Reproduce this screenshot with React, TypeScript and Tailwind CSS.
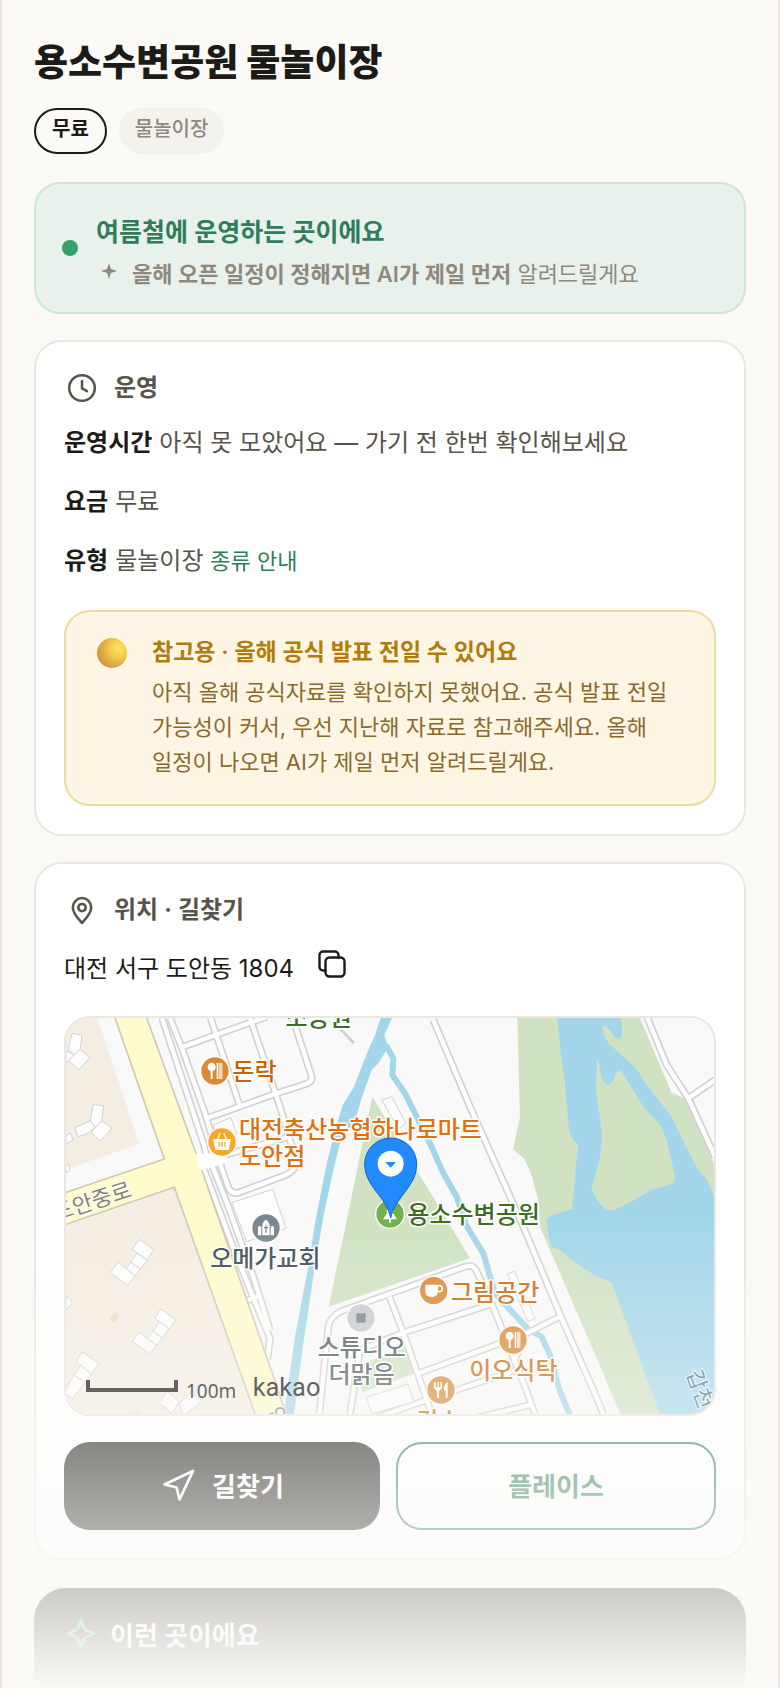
import type { ReactNode } from "react";
import { Navigation } from "lucide-react";

const MAP_FONT = "font-['Noto_Sans_CJK_KR',sans-serif]";

function ClockIcon() {
  return (
    <svg viewBox="0 0 36 36" className="size-9" fill="none" stroke="currentColor" strokeWidth="2.5" strokeLinecap="round" strokeLinejoin="round" aria-hidden="true">
      <circle cx="18" cy="18" r="12.8" />
      <path d="M18 11v7.4l5 2.8" />
    </svg>
  );
}

function PinIcon() {
  return (
    <svg viewBox="0 0 36 36" className="size-9" fill="none" stroke="currentColor" strokeWidth="2.5" strokeLinecap="round" strokeLinejoin="round" aria-hidden="true">
      <path d="M18 31c-2.200-3-9.200-8.600-9.200-15.700a9.200 9.200 0 0 1 18.400 0C27.200 22.400 20.200 28 18 31z" />
      <circle cx="18" cy="15.600" r="3.700" />
    </svg>
  );
}

function CopyIcon() {
  return (
    <svg viewBox="0 0 28 28" className="size-7" fill="none" stroke="currentColor" strokeWidth="2.4" strokeLinecap="round" strokeLinejoin="round" aria-hidden="true">
      <rect x="7.500" y="7.500" width="19" height="19" rx="4" />
      <path d="M7.500 20.500H5a3.500 3.500 0 0 1-3.500-3.500V5A3.500 3.500 0 0 1 5 1.500h12A3.500 3.500 0 0 1 20.500 5v2.500" />
    </svg>
  );
}

function StarIcon() {
  return (
    <svg viewBox="0 0 36 36" className="size-9" fill="none" stroke="currentColor" strokeWidth="2.800" strokeLinejoin="round" aria-hidden="true">
      <path d="M17 2.500l3.200 7.600a4 4 0 0 0 2.200 2.200L30 15.500l-7.600 3.200a4 4 0 0 0-2.200 2.200L17 28.500l-3.200-7.600a4 4 0 0 0-2.200-2.200L4 15.500l7.600-3.200a4 4 0 0 0 2.200-2.200z" />
    </svg>
  );
}

function CardHeader({ icon, children }: { icon: ReactNode; children: ReactNode }) {
  return (
    <h2 className="flex items-center gap-[14px] text-[24px] leading-9 font-semibold text-[#57534a]">
      {icon}
      {children}
    </h2>
  );
}

function InfoRow({ label, children }: { label: string; children: ReactNode }) {
  return (
    <div className="flex flex-wrap items-baseline gap-x-[7px]">
      <dt className="font-semibold text-[#1c1b18]">{label}</dt>
      <dd className="text-[#57534a]">{children}</dd>
    </div>
  );
}

const minorRoads = [
  "M336 24L462 405L470 440",
  "M360 24L395 112L470 325L500 430",
  "M395 112L650 20",
  "M470 325L680 250L768 222Q790 215 784 196L728 24",
  "M482 24L570 290",
  "M600 24L690 290L735 440Q745 480 705 496L565 548Q545 553 536 535L508 455",
  "M440 455L508 440L720 380",
  "M462 478L560 740L625 900L660 985L652 1050",
  "M488 470L535 590L610 800L660 960",
  "M590 872L630 858",
  "M808 1212L835 950Q838 925 870 905L1245 770Q1268 762 1278 780L1325 880L1425 1130L1455 1212",
  "M900 1212L930 1020L1060 968L1325 882",
  "M1018 860L1060 968L1120 1140L1145 1212",
  "M1100 1092L1345 1002L1440 965L1530 920",
  "M930 1240L1130 1170L1400 1080",
  "M1210 1240L1440 1185",
  "M1425 975L1390 1060",
  "M1150 30L1260 290L1420 650L1535 925L1630 1140L1660 1212",
  "M1790 18L1850 165L1915 265L1995 440",
  "M1915 265L1995 210",
];

const buildings = [
  "M66 70L96 76L90 118L72 134L55 118Z",
  "M90 118L120 142L86 179L56 152L72 134Z",
  "M48 122L72 134L48 160Z",
  "M130 283L161 288L155 333L136 352L121 333Z",
  "M155 333L186 354L151 393L124 367L136 352Z",
  "M121 333L136 352L110 372L84 380L74 353Z",
  "M48 376L62 369L69 391L48 401Z",
  "M48 466L56 461L60 482L48 488Z",
  "M268 688L311 719L292 751L246 718Z",
  "M261 729L292 751L271 777L242 757Z",
  "M242 757L271 777L255 798L229 776Z",
  "M229 776L255 798L232 825L181 788L205 757Z",
  "M333 897L377 929L358 957L314 925Z",
  "M328 935L358 957L337 984L309 963Z",
  "M309 963L337 984L320 1006L292 986Z",
  "M292 986L320 1006L299 1032L247 994L268 967Z",
  "M97 1026L146 1060L124 1092L78 1055Z",
  "M92 1066L124 1092L104 1119L72 1095Z",
  "M72 1095L104 1119L69 1164L40 1150Z",
  "M350 1144L388 1175L365 1210L328 1178Z",
  "M388 1180L420 1150L460 1172L400 1216Z",
  "M48 858L68 877L48 902Z",
  "M245 1202L270 1212H240Z",
  "M545 578L668 538L708 655L590 695Z",
  "M490 345L543 323L560 372L508 392Z",
  "M996 270L1025 260L1068 340L1045 357Z",
  "M1372 792L1394 784L1455 925L1434 935Z",
  "M950 1162L1073 1122L1092 1175L965 1212Z",
];

function Poi({ x, y, color, children }: { x: number; y: number; color: string; children: ReactNode }) {
  return (
    <g transform={`translate(${x} ${y})`}>
      <circle r="43" fill={color} stroke="#fff" strokeWidth="4" />
      {children}
    </g>
  );
}

function SpoonGlyph() {
  return (
    <g fill="#fff">
      <ellipse cx="-10" cy="-12" rx="12" ry="13" />
      <rect x="-13" y="-4" width="6" height="28" />
      <rect x="5" y="-24" width="5" height="48" />
      <rect x="13" y="-24" width="4" height="48" />
      <rect x="19" y="-24" width="3" height="48" />
    </g>
  );
}

function Label({ x, y, color, anchor, children }: { x: number; y: number; color: string; anchor?: "middle"; children: string }) {
  return (
    <text
      x={x}
      y={y}
      fill={color}
      stroke="#fff"
      strokeWidth="9"
      strokeLinejoin="round"
      paintOrder="stroke"
      textAnchor={anchor}
      fontSize="72"
      className={`${MAP_FONT} font-medium`}
    >
      {children}
    </text>
  );
}

function MapView() {
  return (
    <svg viewBox="48 24 1944 1188" preserveAspectRatio="xMidYMid slice" className="block h-full w-full" role="img" aria-label="용소수변공원 지도">
      <rect x="48" y="24" width="1944" height="1188" fill="#f9f9f9" />
      <path d="M48 24H143L268 402L48 478Z" fill="#f4ede2" />
      <path d="M48 648L373 535L612 1212H48Z" fill="#f4ede2" />
      <path d="M193 906L207 914L193 938L179 930Z" fill="#eaddb9" />

      {/* parks */}
      <path d="M967 260L1100 480L1260 745L836 890L905 560L935 410Z" fill="#d0e2c2" />
      <path d="M935 1062L1062 1012L1095 1090L935 1147Z" fill="#d0e2c2" />
      <path d="M1402 24H1770L1865 248L1905 265L1992 460V1212H1710L1655 1080L1470 650L1465 570L1442 487L1423 447L1389 418L1410 320Z" fill="#d0e2c2" />

      {/* water */}
      <path d="M1522 24H1714L1717 78Q1705 95 1690 75Q1672 45 1660 48Q1652 65 1675 100L1725 145Q1765 178 1780 210L1810 250L1865 320Q1905 410 1945 480L1970 508L1992 558V1212H1830L1685 818L1635 797L1590 768L1530 720L1506 710Q1488 665 1491 627Q1495 617 1567 597L1575 500L1584 403L1568 388L1557 362L1543 200L1533 140Z" fill="#a3d6ea" />
      <path d="M1641 152Q1646 146 1648 165L1654 200Q1670 238 1687 215L1698 188Q1713 175 1722 195L1780 290L1835 350L1853 400L1875 500L1870 520L1805 540L1715 590Q1680 608 1662 595Q1628 560 1625 532L1650 445L1657 380L1638 240Z" fill="#d0e2c2" />
      <path d="M992 24L975 75L955 120L935 170L912 230L878 285L860 345L835 440L822 500L795 640L775 770L750 900L735 980L708 1170L703 1212H732L760 1000L790 800L820 620L850 480L870 400L915 330L940 250L965 180L985 160L1015 112L1003 75L1026 24Z" fill="#a3d6ea" />
      <path d="M1008 105L1030 145L1027 195L1065 250L1100 320L1140 400L1180 490L1220 560L1248 645L1300 730L1320 800L1335 850L1390 910L1435 958L1475 980L1500 1035L1530 1145L1560 1215" fill="none" stroke="#a3d6ea" strokeWidth="18" strokeLinejoin="round" />

      {/* streets */}
      <g fill="none" stroke="#d2d2d2" strokeWidth="23" strokeLinejoin="round">
        {minorRoads.map((d) => (
          <path key={d} d={d} />
        ))}
      </g>
      <g fill="none" stroke="#fff" strokeWidth="13" strokeLinejoin="round">
        {minorRoads.map((d) => (
          <path key={d} d={d} />
        ))}
      </g>
      <path d="M870 56L912 100" stroke="#cfcfcf" strokeWidth="8" />
      <path d="M193 18H288L438 430L712 1220H618L373 532L40 646V550L343 447Z" fill="#fffbcc" stroke="#d0c8b4" strokeWidth="5" />
      <path d="M436 432L530 428V458L450 482Z" fill="#fff" />

      <g fill="#fdfdfd" stroke="#d2d2d2" strokeWidth="3" strokeLinejoin="round">
        {buildings.map((d) => (
          <path key={d} d={d} />
        ))}
      </g>

      <g fill="#85827e" stroke="#fff" strokeWidth="5" paintOrder="stroke" fontSize="66" className={MAP_FONT}>
        <text x="18" y="634" transform="rotate(-18 18 634)">도안중로</text>
        <text x="650" y="1200" transform="rotate(70 650 1200)">안</text>
      </g>

      <Poi x={495} y={183} color="#d98a35">
        <SpoonGlyph />
      </Poi>
      <Poi x={516} y={396} color="#fba62c">
        <path d="M-27 -9H27L20 24H-20Z" fill="#fff" />
        <path d="M-14 -6L-6 -26M14 -6L6 -26" stroke="#fff" strokeWidth="4" fill="none" />
        <path d="M-9 0V14M0 0V14M9 0V14" stroke="#fba62c" strokeWidth="4" />
      </Poi>
      <Poi x={648} y={654} color="#78868e">
        <path d="M-24 22V-2Q-19 -12 -14 -2V22ZM24 22V-2Q19 -12 14 -2V22ZM-11 22V-8Q-8 -22 0 -25Q8 -22 11 -8V22Z" fill="#fff" />
        <path d="M0 -8V14M-6 -1H6" stroke="#78868e" strokeWidth="4" />
      </Poi>
      <Poi x={1020} y={612} color="#73af4c">
        <path d="M0 -26L12 -6H7L21 16H3V26H-3V16H-21L-7 -6H-12Z" fill="#fff" />
      </Poi>
      <Poi x={1151} y={842} color="#d98a35">
        <path d="M-25 -18H13V2Q13 18 -6 20Q-25 18 -25 2Z" fill="#fff" />
        <circle cx="17" cy="-6" r="9" fill="none" stroke="#fff" strokeWidth="5" />
      </Poi>
      <Poi x={1389} y={990} color="#d98a35">
        <SpoonGlyph />
      </Poi>
      <Poi x={1173} y={1140} color="#d98a35">
        <path d="M-21 -24V-8Q-20 0 -12 2V24H-6V2Q2 0 3 -8V-24H-2V-8H-7V-24H-11V-8H-16V-24ZM20 -24Q8 -18 9 2H14V24H20Z" fill="#fff" />
      </Poi>
      <Poi x={933} y={924} color="#c9cacd">
        <rect x="-14" y="-14" width="28" height="28" fill="#78848c" />
      </Poi>

      <Label x={806} y={48} color="#3d6b1f" anchor="middle">소공원</Label>
      <Label x={547} y={210} color="#c86400">돈락</Label>
      <Label x={567} y={384} color="#e2700c">대전축산농협하나로마트</Label>
      <Label x={567} y={464} color="#e2700c">도안점</Label>
      <Label x={646} y={772} color="#414d55" anchor="middle">오메가교회</Label>
      <Label x={1072} y={639} color="#3d6b1f">용소수변공원</Label>
      <Label x={1203} y={872} color="#c86a0c">그림공간</Label>
      <Label x={1390} y={1108} color="#c86a0c" anchor="middle">이오식탁</Label>
      <Label x={935} y={1039} color="#4b5963" anchor="middle">스튜디오</Label>
      <Label x={935} y={1119} color="#4b5963" anchor="middle">더맑음</Label>
      <Label x={1165} y={1258} color="#c86a0c" anchor="middle">긴스</Label>
      <text x="1909" y="1090" fill="#45758e" stroke="#e4f2f8" strokeWidth="7" paintOrder="stroke" fontSize="64" transform="rotate(70 1909 1090)" className={MAP_FONT}>
        갑천
      </text>

      {/* selected place marker */}
      <path d="M1022 624C1010 560 944 530 944 462A78 78 0 0 1 1100 462C1100 530 1036 560 1022 624Z" fill="#2289ff" stroke="#1565c9" strokeWidth="3" />
      <circle cx="1022" cy="461" r="39" fill="#fff" />
      <path d="M1006 456H1038L1022 473Z" fill="#2289ff" />

      <path d="M114 1110V1140H378V1110" fill="none" stroke="#0a0a0a" strokeWidth="12" />
      <text x="408" y="1163" fill="#0a0a0a" fontSize="57" className="font-['Noto_Sans',sans-serif]">100m</text>
      <text x="608" y="1157" fill="#0a0a0a" fontSize="76" className="font-[Roboto,sans-serif]">kakao</text>
    </svg>
  );
}

export default function App() {
  return (
    <main className="relative mx-auto h-screen w-full max-w-[780px] overflow-hidden border-x-2 border-[#e9e7e0] bg-[#fbfaf7] px-8 pt-9 font-[Inter,'Noto_Sans_CJK_KR',sans-serif] text-[24px] text-[#1c1b18] break-keep">
      <h1 className="text-[37px] leading-[54px] font-extrabold">용소수변공원 물놀이장</h1>

      <ul className="mt-[18px] flex gap-3 text-[20px] leading-7">
        <li className="flex h-[46px] items-center rounded-full border-2 border-[#1c1b18] px-4 pb-1 font-semibold">무료</li>
        <li className="flex h-[46px] items-center rounded-full bg-[#f3f2ed] px-4 pb-1 font-medium text-[#8f897d]">물놀이장</li>
      </ul>

      <section className="mt-7 flex items-center gap-[18px] rounded-[26px] border-2 border-[#cfe5d8] bg-[#e8f1eb] px-[26px] py-5">
        <span className="size-4 shrink-0 rounded-full bg-[#35a26b]" />
        <div className="pt-[10px] pb-[2px]">
          <p className="text-[25px] leading-9 font-semibold text-[#2f7d5b]">여름철에 운영하는 곳이에요</p>
          <p className="mt-2 flex items-center gap-[14px] text-[22px] leading-8 text-[#8f897d]">
            <svg viewBox="0 0 22 22" className="mb-2 size-[22px]" fill="currentColor" aria-hidden="true">
              <path d="M13 4l1.900 6.100L21 12l-6.100 1.900L13 20l-1.900-6.100L5 12l6.100-1.900z" />
            </svg>
            <span>
              <strong className="font-semibold">올해 오픈 일정이 정해지면 AI가 제일 먼저</strong> 알려드릴게요
            </span>
          </p>
        </div>
      </section>

      <section className="mt-[26px] rounded-[28px] border-2 border-[#e9e7e0] bg-white p-7">
        <CardHeader icon={<ClockIcon />}>운영</CardHeader>
        <dl className="mt-[15px] flex flex-col gap-[15px] leading-[44px]">
          <InfoRow label="운영시간">아직 못 모았어요 — 가기 전 한번 확인해보세요</InfoRow>
          <InfoRow label="요금">무료</InfoRow>
          <InfoRow label="유형">
            물놀이장{" "}
            <a href="#types" className="text-[22px] text-[#2f7d5b]">
              종류 안내
            </a>
          </InfoRow>
        </dl>

        <div className="mt-[27px] flex gap-6 rounded-[26px] border-2 border-[#efd9a0] bg-[#fff5e5] px-[30px] py-6">
          <span className="mx-px mt-[2px] size-[30px] shrink-0 rounded-full bg-[radial-gradient(circle_at_72%_35%,#ffe75f_0%,#f3cb4c_30%,#d9a53f_62%,#c98a4a_90%)]" />
          <div>
            <h3 className="text-[23px] leading-8 font-semibold text-[#b27c0b]">참고용 · 올해 공식 발표 전일 수 있어요</h3>
            <p className="mt-[7px] text-[22px] leading-[35px] text-[#8a6a2c]">
              아직 올해 공식자료를 확인하지 못했어요. 공식 발표 전일 가능성이 커서, 우선 지난해 자료로 참고해주세요. 올해 일정이 나오면 AI가 제일 먼저 알려드릴게요.
            </p>
          </div>
        </div>
      </section>

      <section className="mt-[26px] rounded-[28px] border-2 border-[#e9e7e0] bg-white p-7">
        <CardHeader icon={<PinIcon />}>위치 · 길찾기</CardHeader>
        <div className="mt-4 flex gap-6 leading-[50px]">
          <address className="not-italic">대전 서구 도안동 1804</address>
          <button type="button" aria-label="주소 복사" className="flex items-center pb-[10px]">
            <CopyIcon />
          </button>
        </div>
        <div className="mt-[22px] h-[400px] overflow-hidden rounded-[26px] border-2 border-[#e9e7e0]">
          <MapView />
        </div>
        <div className="mt-[26px] flex gap-4 text-[26px] font-semibold">
          <button type="button" className="flex h-[88px] flex-1 items-center justify-center gap-4 rounded-[26px] bg-[#1c1b18] text-white">
            <Navigation size={36} strokeWidth={1.8} />
            길찾기
          </button>
          <button type="button" className="h-[88px] flex-1 rounded-[26px] border-2 border-[#2f7d5b] text-[#2f7d5b]">
            플레이스
          </button>
        </div>
      </section>

      <section className="mt-7 min-h-60 rounded-[32px] bg-[#1c1b18] p-[30px]">
        <h2 className="flex items-center gap-[10px] text-[26px] leading-9 font-bold text-white">
          <span className="text-[#35c27b]">
            <StarIcon />
          </span>
          이런 곳이에요
        </h2>
      </section>

      <div className="pointer-events-none absolute -inset-x-[2px] bottom-0 h-[28%] bg-linear-to-b from-[#fbfaf7]/0 to-[#fbfaf7]" />
    </main>
  );
}
